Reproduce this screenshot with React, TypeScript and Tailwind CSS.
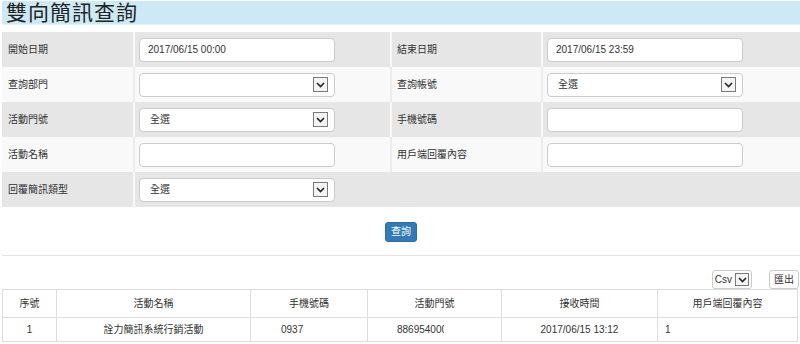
function Arrow({ small = false }: { small?: boolean }) {
  return (
    <span
      className={`flex shrink-0 items-center justify-center border border-[#7a7a7a] bg-[#f4f4f4] ${
        small ? 'h-[13px] w-[14px]' : 'h-[15px] w-[15px]'
      }`}
    >
      <svg width="9" height="6" viewBox="0 0 9 6">
        <path d="M1 1 L4.5 4.5 L8 1" fill="none" stroke="#222" strokeWidth="1.6" />
      </svg>
    </span>
  )
}

function TextBox({ value = '' }: { value?: string }) {
  return (
    <div className="flex h-[24px] w-[196px] items-center rounded-[4px] border border-[#cccccc] bg-white px-[8px] text-[10px] text-[#333]">
      {value}
    </div>
  )
}

function SelectBox({ value = '' }: { value?: string }) {
  return (
    <div className="flex h-[24px] w-[196px] items-center justify-between rounded-[4px] border border-[#cccccc] bg-white pl-[10px] pr-[6px] text-[10px] text-[#333]">
      <span>{value}</span>
      <Arrow />
    </div>
  )
}

type Cell = { label: string; field: React.ReactNode }

function FormRow({ left, right, shade }: { left: Cell; right?: Cell; shade: boolean }) {
  const bg = shade ? 'bg-[#e6e6e6]' : 'bg-[#f9f9f9]'
  const line = shade ? 'border-[#f7f7f7]' : 'border-[#ececec]'
  return (
    <div className={`flex h-[35px] text-[10px] text-[#333] ${bg}`}>
      <div className="flex w-[131px] items-center pl-[6px]">{left.label}</div>
      <div className={`flex w-[257px] items-center border-l-2 pl-[4px] ${line}`}>{left.field}</div>
      {right ? (
        <>
          <div className={`flex w-[151px] items-center border-l-2 pl-[5px] ${line}`}>{right.label}</div>
          <div className={`flex flex-1 items-center border-l-2 pl-[4px] ${line}`}>{right.field}</div>
        </>
      ) : (
        <div className="flex-1" />
      )}
    </div>
  )
}

const cols = ['w-[54px]', 'w-[194px]', 'w-[117px]', 'w-[134px]', 'w-[156px]', 'w-[140px]']
const heads = ['序號', '活動名稱', '手機號碼', '活動門號', '接收時間', '用戶端回覆內容']

export default function App() {
  return (
    <div
      className="h-[344px] w-[800px] overflow-hidden bg-white pl-[2px] pt-[1px] text-[#333]"
      style={{ fontFamily: '"Liberation Sans", "Noto Sans CJK TC", sans-serif' }}
    >
      {/* title */}
      <div className="flex h-[24px] items-center border-b border-[#e3f3fa] bg-[#cde9f5] pl-[4px] text-[21px] leading-none tracking-[1px] text-[#222]">
        雙向簡訊查詢
      </div>

      {/* search form */}
      <div className="mt-[7px]">
        <FormRow
          shade
          left={{ label: '開始日期', field: <TextBox value="2017/06/15 00:00" /> }}
          right={{ label: '結束日期', field: <TextBox value="2017/06/15 23:59" /> }}
        />
        <FormRow
          shade={false}
          left={{ label: '查詢部門', field: <SelectBox /> }}
          right={{ label: '查詢帳號', field: <SelectBox value="全選" /> }}
        />
        <FormRow
          shade
          left={{ label: '活動門號', field: <SelectBox value="全選" /> }}
          right={{ label: '手機號碼', field: <TextBox /> }}
        />
        <FormRow
          shade={false}
          left={{ label: '活動名稱', field: <TextBox /> }}
          right={{ label: '用戶端回覆內容', field: <TextBox /> }}
        />
        <FormRow shade left={{ label: '回覆簡訊類型', field: <SelectBox value="全選" /> }} />
      </div>

      <div className="flex justify-center pt-[15px]">
        <button className="h-[20px] w-[32px] rounded-[3px] border border-[#2e6da4] bg-[#337ab7] text-[10px] leading-none text-white">
          查詢
        </button>
      </div>

      <div className="mt-[13px] border-t border-[#e5e5e5]" />

      {/* export */}
      <div className="flex justify-end gap-[17px] pr-[1px] pt-[14px]">
        <div className="flex h-[19px] w-[40px] items-center justify-end gap-[3px] rounded-[3px] border border-[#cccccc] bg-white pr-[2px] text-[10px]">
          Csv
          <Arrow small />
        </div>
        <div className="flex h-[19px] w-[30px] items-center justify-center rounded-[3px] border border-[#cccccc] bg-white text-[10px]">
          匯出
        </div>
      </div>

      {/* results */}
      <table className="w-[795px] table-fixed border-collapse text-[10px]">
        <thead>
          <tr className="h-[28px]">
            {heads.map((h, i) => (
              <th key={h} className={`${cols[i]} border border-[#dddddd] text-center font-normal`}>
                {h}
              </th>
            ))}
          </tr>
        </thead>
        <tbody>
          <tr className="h-[24px]">
            <td className="border border-[#dddddd] text-center">1</td>
            <td className="border border-[#dddddd] text-center">詮力簡訊系統行銷活動</td>
            <td className="border border-[#dddddd] pl-[30px]">0937</td>
            <td className="border border-[#dddddd] pl-[29px]">
              <span className="inline-block w-[47px] overflow-hidden whitespace-nowrap align-middle">8869540000</span>
            </td>
            <td className="border border-[#dddddd] text-center">2017/06/15 13:12</td>
            <td className="border border-[#dddddd] pl-[7px]">1</td>
          </tr>
        </tbody>
      </table>
    </div>
  )
}
